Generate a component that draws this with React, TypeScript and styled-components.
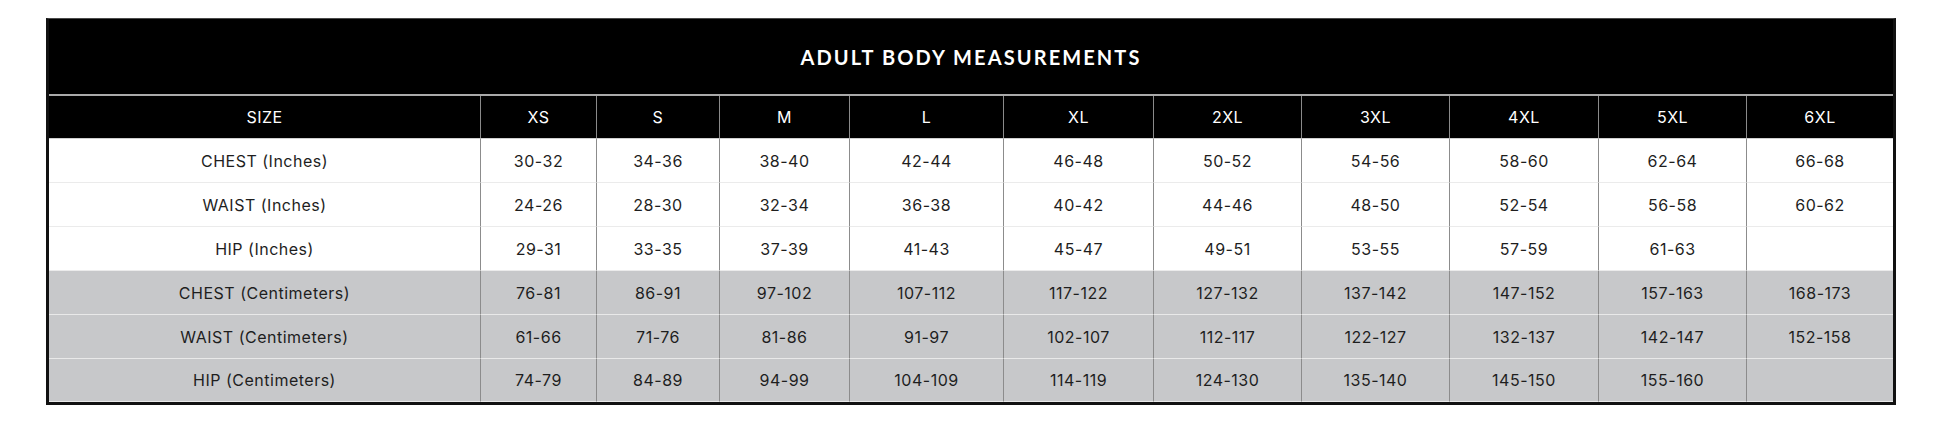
import React from "react";
import styled, { createGlobalStyle } from "styled-components";

const GlobalStyle = createGlobalStyle`
  html, body {
    margin: 0;
    padding: 0;
    background: #ffffff;
  }
`;

const sizes = ["XS", "S", "M", "L", "XL", "2XL", "3XL", "4XL", "5XL", "6XL"];
const colWidths = [432, 116, 123, 130, 154, 150, 148, 148, 149, 148, 146];

const rows = [
  { label: "CHEST (Inches)", shaded: false, values: ["30-32", "34-36", "38-40", "42-44", "46-48", "50-52", "54-56", "58-60", "62-64", "66-68"] },
  { label: "WAIST (Inches)", shaded: false, values: ["24-26", "28-30", "32-34", "36-38", "40-42", "44-46", "48-50", "52-54", "56-58", "60-62"] },
  { label: "HIP (Inches)", shaded: false, values: ["29-31", "33-35", "37-39", "41-43", "45-47", "49-51", "53-55", "57-59", "61-63", ""] },
  { label: "CHEST (Centimeters)", shaded: true, values: ["76-81", "86-91", "97-102", "107-112", "117-122", "127-132", "137-142", "147-152", "157-163", "168-173"] },
  { label: "WAIST (Centimeters)", shaded: true, values: ["61-66", "71-76", "81-86", "91-97", "102-107", "112-117", "122-127", "132-137", "142-147", "152-158"] },
  { label: "HIP (Centimeters)", shaded: true, values: ["74-79", "84-89", "94-99", "104-109", "114-119", "124-130", "135-140", "145-150", "155-160", ""] },
];

const App = () => {
  return (
    <Page>
      <GlobalStyle />
      <Chart>
        <colgroup>
          {colWidths.map((w, i) => (
            <col key={i} style={{ width: w }} />
          ))}
        </colgroup>
        <thead>
          <tr>
            <TitleCell colSpan={11}>ADULT BODY MEASUREMENTS</TitleCell>
          </tr>
          <tr>
            <HeadCell>SIZE</HeadCell>
            {sizes.map((s) => (
              <HeadCell key={s}>{s}</HeadCell>
            ))}
          </tr>
        </thead>
        <tbody>
          {rows.map((row, r) => (
            <tr key={row.label}>
              <Cell $shaded={row.shaded} $last={r === rows.length - 1}>
                {row.label}
              </Cell>
              {row.values.map((v, i) => (
                <Cell key={i} $shaded={row.shaded} $last={r === rows.length - 1}>
                  {v}
                </Cell>
              ))}
            </tr>
          ))}
        </tbody>
      </Chart>
    </Page>
  );
};

export default App;

const Page = styled.div`
  padding: 18px 0 0 46px;
`;

const Chart = styled.table`
  width: 1850px;
  table-layout: fixed;
  border-collapse: separate;
  border-spacing: 0;
  border: 3px solid #111111;
  border-top: 1px solid #4a4a4a;
  font-family: Inter, "Liberation Sans", sans-serif;
  font-size: 16px;
  letter-spacing: 0.5px;
`;

const TitleCell = styled.th`
  height: 75px;
  padding: 0;
  background: #000000;
  color: #ffffff;
  font-family: Lato, "Liberation Sans", sans-serif;
  font-weight: 700;
  font-size: 20px;
  letter-spacing: 2.1px;
  text-align: center;
  vertical-align: middle;
  border-bottom: 2px solid #a9a9a9;
`;

const HeadCell = styled.th`
  height: 42px;
  padding: 0;
  background: #000000;
  color: #ffffff;
  font-weight: 400;
  text-align: center;
  vertical-align: middle;
  border-right: 1px solid #8a8a8a;
  border-bottom: 1px solid #cfcfcf;

  &:last-child {
    border-right: none;
  }
`;

const Cell = styled.td<{ $shaded: boolean; $last: boolean }>`
  height: ${(p) => (p.$last ? 42 : 43)}px;
  padding: 0;
  background: ${(p) => (p.$shaded ? "#c7c8ca" : "#ffffff")};
  color: #1e1e1e;
  text-align: center;
  vertical-align: middle;
  border-right: 1px solid #8c8c8c;
  border-bottom: 1px solid ${(p) => (p.$shaded ? "#e9e9e9" : "#ebebeb")};

  &:last-child {
    border-right: none;
  }
`;
